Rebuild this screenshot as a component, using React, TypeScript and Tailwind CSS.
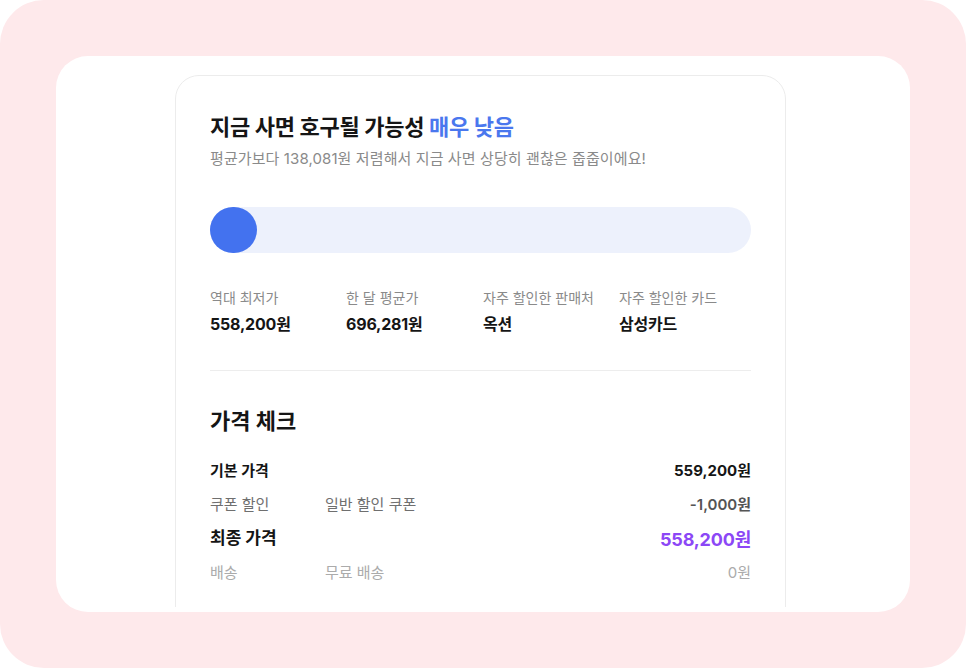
import React from "react";

const font = { fontFamily: 'Inter, "Noto Sans CJK KR", "Noto Sans", sans-serif' };

export default function App() {
  const stats = [
    { label: "역대 최저가", value: "558,200원" },
    { label: "한 달 평균가", value: "696,281원" },
    { label: "자주 할인한 판매처", value: "옥션" },
    { label: "자주 할인한 카드", value: "삼성카드" },
  ];
  return (
    <div className="w-[966px] h-[668px] bg-white" style={font}>
      <div className="w-full h-full rounded-[44px] bg-[#fee9eb] p-[56px]">
        <div className="w-full h-full rounded-[32px] bg-white pl-[119px] pt-[19px]">
          <div className="w-[611px] h-[532px] overflow-hidden">
            <div className="w-[611px] h-[600px] rounded-[24px] border border-[#ececec] px-[34px] pt-[36px]">
              <div className="text-[22px] leading-[30px] font-bold text-[#151515] tracking-[-0.3px]">
                지금 사면 호구될 가능성 <span className="text-[#4a77ee]">매우 낮음</span>
              </div>
              <div className="mt-[6px] text-[15px] leading-[22px] text-[#8a8a8a] tracking-[0.1px]">
                평균가보다 138,081원 저렴해서 지금 사면 상당히 괜찮은 줍줍이에요!
              </div>
              <div className="mt-[37px] h-[46px] rounded-full bg-[#edf1fc] flex items-center">
                <div className="w-[47px] h-[46px] rounded-full bg-[#4372ef]" />
              </div>
              <div className="mt-[35px] grid grid-cols-[136px_137px_136px_1fr]">
                {stats.map((s) => (
                  <div key={s.label}>
                    <div className="text-[14px] leading-[20px] text-[#8a8a8a]">{s.label}</div>
                    <div className="mt-[5px] text-[16px] leading-[22px] font-bold text-[#151515] tracking-[-0.2px]">{s.value}</div>
                  </div>
                ))}
              </div>
              <div className="mt-[35px] h-px bg-[#ededed]" />
              <div className="mt-[36px] text-[22px] leading-[28px] font-bold text-[#151515]">가격 체크</div>
              <div className="mt-[19px]">
                <div className="h-[34px] flex items-center text-[15px] font-bold text-[#151515]">
                  <div className="w-[115px]">기본 가격</div>
                  <div className="flex-1" />
                  <div>559,200원</div>
                </div>
                <div className="h-[34px] flex items-center text-[15px] text-[#6f6f6f]">
                  <div className="w-[115px]">쿠폰 할인</div>
                  <div className="flex-1">일반 할인 쿠폰</div>
                  <div className="font-semibold text-[#555]">-1,000원</div>
                </div>
                <div className="h-[34px] flex items-center text-[#151515]">
                  <div className="w-[115px] text-[17px] font-bold">최종 가격</div>
                  <div className="flex-1" />
                  <div className="text-[18px] font-bold text-[#8c47f6] tracking-[-0.2px]">558,200원</div>
                </div>
                <div className="h-[34px] flex items-center text-[15px] text-[#ababab]">
                  <div className="w-[115px]">배송</div>
                  <div className="flex-1">무료 배송</div>
                  <div>0원</div>
                </div>
              </div>
            </div>
          </div>
        </div>
      </div>
    </div>
  );
}
